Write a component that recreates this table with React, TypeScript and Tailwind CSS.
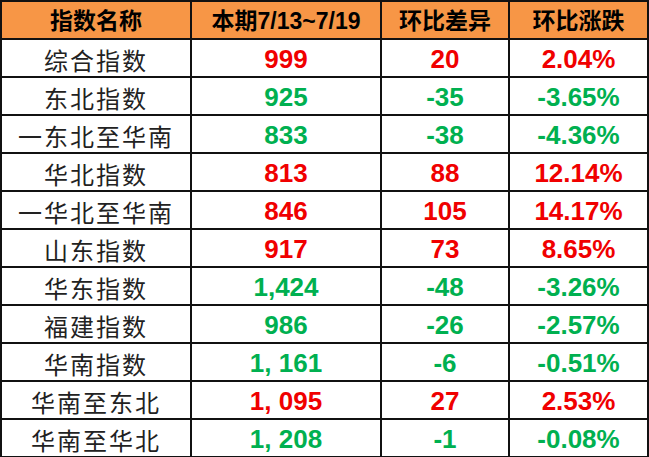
const RED = "text-[#f00000]";
const GREEN = "text-[#00b050]";

type Row = { name: string; value: string; diff: string; pct: string; up: boolean };

const rows: Row[] = [
  { name: "综合指数", value: "999", diff: "20", pct: "2.04%", up: true },
  { name: "东北指数", value: "925", diff: "-35", pct: "-3.65%", up: false },
  { name: "一东北至华南", value: "833", diff: "-38", pct: "-4.36%", up: false },
  { name: "华北指数", value: "813", diff: "88", pct: "12.14%", up: true },
  { name: "一华北至华南", value: "846", diff: "105", pct: "14.17%", up: true },
  { name: "山东指数", value: "917", diff: "73", pct: "8.65%", up: true },
  { name: "华东指数", value: "1,424", diff: "-48", pct: "-3.26%", up: false },
  { name: "福建指数", value: "986", diff: "-26", pct: "-2.57%", up: false },
  { name: "华南指数", value: "1, 161", diff: "-6", pct: "-0.51%", up: false },
  { name: "华南至东北", value: "1, 095", diff: "27", pct: "2.53%", up: true },
  { name: "华南至华北", value: "1, 208", diff: "-1", pct: "-0.08%", up: false },
];

const cell =
  "h-[38px] flex items-center justify-center pt-[3px] border-r-2 border-b-2 border-[#111] whitespace-pre";
const num = "text-[26px] font-bold font-['Liberation_Sans',sans-serif]";

export default function App() {
  return (
    <div className="w-[649px] h-[457px] bg-white overflow-hidden">
      <div className="grid grid-cols-[190px_190px_128px_139px] w-[649px] border-l-2 border-t-2 border-[#111]">
        {["指数名称", "本期7/13~7/19", "环比差异", "环比涨跌"].map((h) => (
          <div
            key={h}
            className={`${cell} bg-[#f79646] text-black font-bold text-[23px] font-['Liberation_Sans','Noto_Sans_CJK_SC',sans-serif]`}
          >
            {h}
          </div>
        ))}
        {rows.map((r) => {
          const color = r.up ? RED : GREEN;
          return (
            <div key={r.name} className="contents">
              <div
                className={`${cell} text-[24px] text-[#222] tracking-[2px] font-['Noto_Sans_CJK_SC',sans-serif]`}
              >
                {r.name}
              </div>
              <div className={`${cell} ${color} ${num}`}>{r.value}</div>
              <div className={`${cell} ${color} ${num}`}>{r.diff}</div>
              <div className={`${cell} ${color} ${num}`}>{r.pct}</div>
            </div>
          );
        })}
      </div>
    </div>
  );
}
